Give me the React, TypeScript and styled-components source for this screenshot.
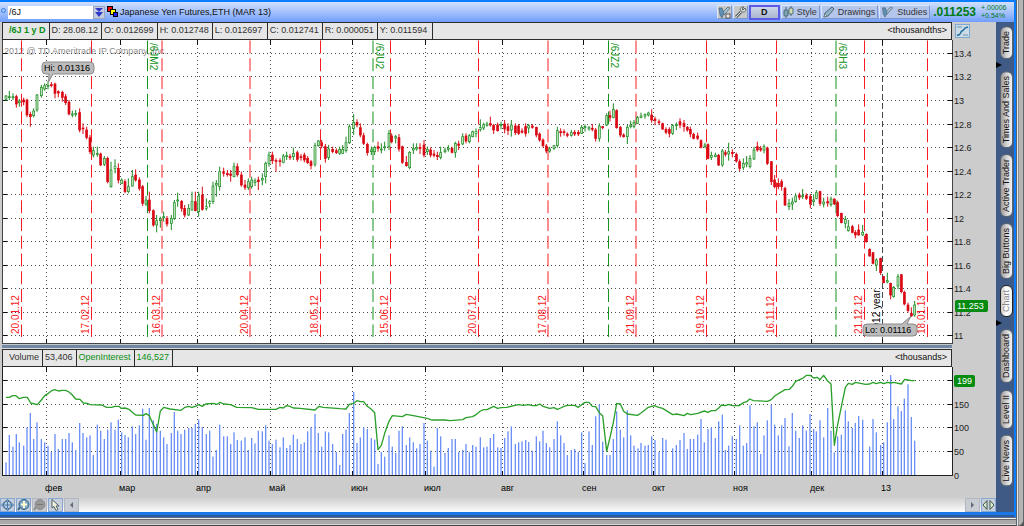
import React from "react";
import styled, { createGlobalStyle } from "styled-components";

const GlobalStyle = createGlobalStyle`
  * { box-sizing: border-box; }
  body {
    margin: 0;
    background: #555;
    font-family: "Liberation Sans", Arial, sans-serif;
    font-size: 9px;
    line-height: 12px;
    color: #111;
  }
  button, input { font: inherit; color: inherit; margin: 0; }
  svg { display: block; }
`;

const Frame = styled.div`
  padding: 0 8px 9px 0;
  background:
    linear-gradient(to right, #56626e 0 1px, #e6e6e6 1px 2px, #909090 2px 3px, #b4b4b4 3px 7px, #666 7px) right top / 8px 100% no-repeat,
    linear-gradient(to bottom, #5b6f8a 0 1px, #f0f0f0 1px 2px, #6c6c6c 2px 3px, #a8a8a8 3px 7px, #d8d8d8 7px 8px, #444 8px) left bottom / 100% 9px no-repeat;
  border-bottom-right-radius: 8px;
`;

const Window = styled.div`
  border: solid #0a7cff;
  border-width: 2px 2px 0 0;
  background: #ccc;
`;

const Header = styled.header`
  display: flex;
  align-items: center;
  height: 20px;
  padding: 0 3px 0 0;
  background: linear-gradient(#cfe0ff, #a5c2fd 50%, #709efb);
`;

const LinkDot = styled.span`
  flex: none;
  width: 5px;
  height: 5px;
  margin: 0 2px 4px 1px;
  border: 1px solid #2e7bea;
  border-radius: 50%;
`;

const SymbolInput = styled.input`
  width: 85px;
  height: 13px;
  padding: 0 1px;
  border: 0;
  background: #fff;
  &:focus { outline: none; }
`;

const PickButton = styled.button`
  width: 12px;
  height: 13px;
  padding: 1px;
  border: 1px solid #9aa7c2;
  background: #c3cbe0;
`;

const Title = styled.h1`
  flex: 1;
  margin: 0 0 0 1px;
  font-size: 9px;
  font-weight: normal;
  white-space: nowrap;
`;

const SymbolMark = styled.span`
  margin-left: 2px;
`;

const HeaderTools = styled.div`
  display: flex;
  gap: 1px;
  align-items: center;
`;

const HeaderButton = styled.button`
  display: flex;
  align-items: center;
  gap: 3px;
  height: 14px;
  padding: 0 2px 0 1px;
  border: 1px solid;
  border-color: #dbe6fb #7f97c8 #7f97c8 #dbe6fb;
  background: #b4c6ec;
  color: #333;
  white-space: nowrap;
`;

const ToolButton = styled(HeaderButton)`
  width: 15px;
  padding: 0;
  background: #c8c8c8;
`;

const PeriodButton = styled.button`
  width: 31px;
  height: 15px;
  padding: 0;
  border: 2px solid #5b5be8;
  background: linear-gradient(#cdd6e8, #aab6cf);
  font-weight: bold;
  line-height: 11px;
`;

const LastPrice = styled.strong`
  margin-left: 2px;
  font-size: 12px;
  color: #007a12;
`;

const Change = styled.div`
  width: 34px;
  padding-left: 4px;
  font-size: 7px;
  line-height: 8px;
  color: #007a12;
`;

const Body = styled.div`
  display: grid;
  grid-template-columns: minmax(0, 1fr) 18px;
`;

const Charts = styled.main`
  min-width: 0;
`;

const ChartRow = styled.div`
  display: grid;
  grid-template-columns: 952fr 44fr;
  background: #ccc;
`;

const InfoBar = styled.div`
  display: flex;
  align-items: stretch;
  height: 18px;
  margin-left: 2px;
  border: 1px solid #2c2c2c;
  background: #e6e6e6;
`;

const InfoCell = styled.span<{ $green?: boolean; $bold?: boolean; $lead?: boolean }>`
  padding: 0 3px 0 ${(p) => (p.$lead ? 6 : 2)}px;
  border-right: 1px solid #2c2c2c;
  line-height: 15px;
  white-space: nowrap;
  color: ${(p) => (p.$green ? "#0a8f14" : "#333")};
  font-weight: ${(p) => (p.$bold ? "bold" : "normal")};
`;

const QuoteCell = styled(InfoCell)`
  min-width: 55px;
`;

const Units = styled.span`
  margin-left: auto;
  padding-right: 4px;
  line-height: 15px;
`;

const AxisHead = styled.div`
  padding: 2px 0 0 3px;
`;

const ScaleButton = styled.button`
  width: 15px;
  height: 14px;
  padding: 0;
  border: 1px solid #7fa8cf;
  background: #cddbe6;
`;

const Splitter = styled.div`
  height: 5px;
  margin-left: 2px;
  background: linear-gradient(#c4c8cc 0 1px, #7388a3 1px 4px, #dcdcdc 4px);
`;

const Plot = styled.svg`
  width: 100%;
  height: auto;
  background: #ccc;
  font-family: "Liberation Sans", Arial, sans-serif;
  font-size: 9px;
`;

const Footer = styled.footer`
  display: flex;
  align-items: center;
  gap: 1px;
  height: 15px;
  background: linear-gradient(#ccc, #fcfcfc);
`;

const FootButton = styled.button<{ $quiet?: boolean }>`
  width: 15px;
  height: 14px;
  padding: 0;
  border: 1px solid ${(p) => (p.$quiet ? "#b2b8c2" : "#86a8d2")};
  background: ${(p) => (p.$quiet ? "#c9cdd3" : "#c6cfdb")};
`;

const Track = styled.div`
  flex: 1;
`;

const BottomEdge = styled.div`
  height: 5px;
  background: linear-gradient(#1a78e6 0 3px, #2d5a9e 3px);
`;

const Rail = styled.nav`
  display: flex;
  flex-direction: column;
  align-items: flex-end;
  padding: 4px 1px 0 0;
  background: #3f5b85;
`;

const RailTab = styled.button<{ $active?: boolean }>`
  width: 13px;
  margin-bottom: 6px;
  padding: 4px 0;
  border: 1px solid ${(p) => (p.$active ? "#222" : "#5d6470")};
  border-radius: 6px;
  background: linear-gradient(to right, #f2f2f2, ${(p) => (p.$active ? "#fff, #ccc" : "#d2d2d2, #9c9c9c")});
  color: ${(p) => (p.$active ? "#888" : "#111")};
  writing-mode: vertical-rl;
  transform: rotate(180deg);
  line-height: 11px;
  white-space: nowrap;
`;

const RailArrow = styled.span`
  align-self: flex-start;
  width: 0;
  height: 6px;
  border: solid transparent;
  border-width: 3px 0 3px 6px;
  border-left-color: #000;
  transform: translateY(-3px);
`;

/* Series points are stored in thirds of a pixel. */

const FINE = "scale(0.33333333)";

// x, high, body top, body bottom, low, direction
const CANDLES = `
18 285 288 298 303 g|28 273 290 293 300 g|39 280 290 293 300 g|49 284 290 312 323 r|58 297 303 308 320 g|71 293 300 306 316 r
81 296 300 345 352 r|91 335 343 350 380 r|101 325 333 347 352 g|111 282 285 330 335 g|124 255 262 287 293 g|134 250 257 267 272 g
144 243 256 259 268 g|154 246 254 257 262 r|165 248 252 280 295 r|175 271 275 279 292 r|187 272 277 292 305 r|197 282 290 308 315 r
207 300 306 342 346 r|217 332 342 345 352 g|227 330 340 343 350 g|239 325 338 390 397 r|249 370 384 387 402 r|260 380 390 412 418 r
270 405 413 455 462 r|280 440 452 465 472 g|292 440 460 463 470 g|302 458 462 495 498 r|313 468 475 493 498 g|323 470 475 545 550 r
333 485 510 560 563 g|345 478 500 505 520 g|355 490 505 540 550 r|365 535 540 550 552 g|375 538 545 575 580 r|385 535 560 575 580 g
397 510 530 558 560 g|407 508 525 540 545 r|418 532 540 565 572 r|428 555 560 610 618 r|438 588 600 612 618 g|448 575 600 632 640 r
460 628 632 675 680 r|470 645 662 675 697 g|481 650 657 662 683 g|491 635 650 653 665 g|501 648 655 672 680 r|514 645 655 670 690 g
523 600 608 655 660 g|533 578 600 603 620 g|545 600 604 625 635 r|554 615 625 645 652 r|566 612 625 645 648 g|576 575 605 630 632 g
586 575 605 632 634 r|596 575 588 635 650 g|607 560 585 628 632 r|619 595 620 625 632 g|629 600 605 610 622 g|639 545 558 605 612 g
649 540 550 555 590 g|659 500 515 560 572 g|671 503 515 520 530 r|682 510 520 524 530 r|692 510 522 526 545 r|702 488 500 530 532 g
712 490 500 524 530 r|724 515 525 555 560 r|735 540 555 562 570 r|745 535 545 563 570 g|755 530 540 560 566 g|765 535 542 548 558 g
775 530 540 545 570 r|787 520 535 540 556 g|797 485 490 530 550 g|807 455 465 490 500 g|817 455 465 482 492 r|828 475 481 484 515 r
840 475 482 485 500 r|850 462 468 487 490 g|860 455 467 470 480 g|870 462 470 473 480 r|880 443 460 470 480 g|892 452 458 478 485 r
903 462 470 473 482 r|913 458 465 480 487 r|923 468 475 488 492 r|933 480 485 497 508 r|945 428 437 493 500 g|955 420 423 437 440 g
965 420 428 438 445 r|976 432 440 475 488 r|986 435 447 473 480 g|998 440 448 455 460 r|1009 445 452 458 462 r|1019 440 448 460 465 g
1028 435 448 460 462 g|1038 410 428 452 458 g|1048 373 380 428 432 g|1061 342 367 385 405 g|1071 358 367 375 382 r|1081 370 383 405 412 r
1091 398 407 430 435 r|1102 428 433 458 467 r|1114 440 450 455 465 g|1124 437 443 455 465 g|1134 425 440 445 455 r|1144 430 447 450 460 g
1154 425 440 443 452 g|1167 390 400 440 450 g|1175 400 408 425 430 r|1187 405 410 414 430 g|1197 402 413 447 455 r|1207 437 440 487 492 r
1219 468 487 497 500 r|1229 453 457 503 508 g|1240 430 445 450 462 g|1250 430 443 447 452 g|1260 430 442 446 462 r|1272 420 435 465 472 r
1282 440 448 455 465 g|1292 442 450 465 472 r|1302 450 462 466 472 r|1312 455 466 470 480 r|1322 440 458 472 478 g|1335 443 450 455 460 g
1345 435 444 448 455 g|1356 440 445 457 460 r|1366 425 430 457 473 g|1376 422 432 436 450 r|1388 400 410 432 435 g|1398 400 408 423 430 r
1408 402 407 425 430 g|1418 392 395 410 412 g|1428 385 395 400 412 g|1441 358 383 388 395 g|1451 368 374 384 390 g|1461 365 372 376 380 g
1471 350 371 375 380 r|1481 372 376 390 402 r|1493 368 375 392 395 r|1503 365 373 377 388 g|1514 360 372 387 400 r|1524 370 380 392 405 r
1534 360 375 390 410 g|1546 370 378 398 405 r|1556 372 378 400 405 r|1566 385 393 397 400 r|1577 370 380 400 410 r|1586 372 377 384 400 g
1597 372 378 382 386 r|1609 380 382 405 412 r|1619 397 402 420 425 r|1629 415 420 437 443 r|1639 432 438 453 460 r|1649 440 447 453 458 g
1662 435 437 445 450 g|1672 380 392 437 443 g|1682 385 395 398 410 r|1692 388 395 398 407 r|1702 397 402 406 412 r|1714 390 398 406 410 g
1724 390 397 402 408 r|1735 390 397 402 408 r|1745 375 382 400 402 g|1755 373 379 383 395 g|1767 378 383 387 392 g|1777 372 385 388 394 r
1787 384 390 415 425 r|1798 370 378 415 425 g|1808 378 380 383 388 r|1820 340 347 375 378 g|1830 332 347 352 365 r|1840 310 328 352 355 g
1850 328 332 383 386 r|1861 378 382 405 412 r|1871 400 405 410 413 r|1882 375 382 410 432 g|1892 362 375 380 385 g|1902 360 367 380 385 g
1912 348 352 370 372 g|1923 338 348 352 355 g|1935 340 344 348 356 g|1945 335 339 345 350 g|1955 328 345 360 368 r|1965 350 357 362 375 r
1977 358 365 368 375 r|1988 368 371 387 390 r|1998 382 388 397 403 r|2008 382 388 400 412 r|2018 372 377 400 405 g|2029 367 373 377 390 g
2040 355 365 375 385 r|2052 360 370 380 395 r|2062 378 382 390 395 r|2071 380 388 402 412 r|2081 398 403 415 418 r|2093 398 408 415 420 r
2103 418 422 442 445 r|2115 428 435 440 445 g|2124 430 434 475 478 r|2134 455 466 472 480 g|2146 458 465 470 472 g|2156 462 466 495 498 r
2167 447 453 495 500 g|2176 450 458 463 470 r|2186 428 455 462 482 g|2197 448 457 461 472 r|2209 458 463 483 488 r|2219 478 485 505 513 r
2230 475 490 502 510 g|2240 468 488 492 502 g|2250 465 475 500 505 g|2262 440 450 477 480 g|2272 425 440 450 455 r|2282 438 446 450 455 r
2292 433 440 450 460 g|2302 440 444 490 495 r|2314 483 485 545 555 r|2324 525 540 560 565 r|2335 535 550 560 568 r|2345 538 545 560 572 r
2355 560 565 615 618 r|2367 597 610 620 630 g|2377 593 606 612 630 g|2387 580 588 605 608 g|2398 578 585 592 600 r|2408 567 587 590 597 g
2419 580 587 595 600 r|2431 582 590 612 625 r|2441 583 600 605 618 g|2449 570 578 595 598 g|2460 572 575 610 618 r|2471 593 606 612 622 g
2483 590 605 609 620 r|2493 590 597 614 620 g|2503 595 597 612 615 r|2513 602 608 647 652 r|2524 638 640 668 670 r|2536 648 658 670 685 g
2545 660 680 692 695 g|2557 675 680 697 700 r|2566 690 697 705 715 r|2576 673 690 705 707 r|2588 675 697 705 708 g|2599 700 703 725 728 r
2609 745 748 768 770 r|2619 756 758 790 793 r|2629 775 780 795 813 g|2642 773 775 818 825 r|2651 828 830 848 850 r|2662 818 842 846 850 g
2672 848 850 885 898 r|2681 858 862 890 893 g|2694 822 830 858 868 g|2704 822 824 875 880 r|2713 872 877 912 916 r|2724 908 915 932 938 r
2734 922 940 948 950 r|2744 903 915 945 950 g`
  .trim()
  .split(/[\n|]/)
  .map((row) => {
    const [x, high, top, bottom, low, dir] = row.split(" ");
    return { x: +x, high: +high, top: +top, bottom: +bottom, low: +low, up: dir === "g" };
  });

// x, top of bar
const VOLUMES = `18,349 28,267 39,302 49,264 58,289 71,299 81,244 91,201 101,279 111,229 124,279 134,289 144,299 154,318 165,264 175,309
187,279 197,279 207,261 217,289 227,312 239,231 249,261 260,274 270,268 280,327 292,236 302,254 313,279 323,251 333,229 345,251
355,221 365,259 375,267 385,274 397,241 407,264 418,238 428,188 438,281 448,186 460,223 470,234 481,254 491,274 501,294 514,261
523,198 533,254 543,264 554,251 566,246 576,246 586,234 596,221 607,243 619,264 629,254 639,332 649,312 659,236 671,271 682,271
692,294 702,259 712,282 724,284 735,274 745,312 755,276 765,292 775,254 787,256 797,238 807,284 817,294 828,281 840,304 850,274
860,306 870,297 880,266 892,279 903,294 913,289 923,256 933,244 945,204 955,261 965,302 976,256 986,259 998,294 1009,318 1019,357
1028,264 1038,251 1048,201 1061,138 1071,291 1081,274 1091,244 1102,249 1114,276 1124,281 1134,354 1144,318 1154,332 1167,268
1177,302 1187,321 1197,254 1207,241 1219,297 1229,274 1240,289 1250,307 1260,294 1272,231 1282,284 1292,314 1302,362 1312,246
1322,271 1335,321 1345,306 1356,279 1366,279 1376,318 1388,312 1398,294 1408,318 1418,297 1428,302 1441,274 1451,304 1461,302
1471,276 1481,264 1493,304 1503,306 1514,276 1524,256 1534,241 1546,294 1556,289 1566,286 1577,282 1586,288 1597,314 1609,271
1619,286 1629,254 1639,291 1649,304 1662,279 1672,226 1682,268 1692,291 1702,327 1714,312 1724,309 1735,318 1745,259 1755,351
1767,256 1777,297 1787,211 1798,175 1808,287 1820,327 1830,327 1840,279 1850,196 1861,251 1871,274 1882,193 1892,268 1902,299
1914,307 1923,291 1935,299 1945,297 1955,271 1965,282 1977,318 1988,276 1998,281 2018,307 2029,297 2040,282 2052,261 2062,309
2071,279 2081,279 2093,266 2103,219 2113,289 2124,249 2134,244 2146,276 2156,226 2167,206 2176,312 2186,299 2197,271 2209,279
2219,238 2230,299 2240,291 2250,178 2262,241 2272,229 2282,324 2292,268 2302,223 2314,176 2324,236 2335,268 2345,238 2355,216
2367,301 2377,201 2387,254 2398,276 2408,238 2419,254 2430,204 2441,249 2449,256 2460,223 2471,274 2483,186 2493,254 2503,319
2513,271 2524,266 2536,193 2545,226 2557,246 2566,231 2576,210 2588,221 2609,302 2619,219 2629,259 2642,297 2651,289 2662,229
2672,87 2681,219 2694,181 2704,195 2713,158 2724,115 2734,213 2744,284`
  .split(/\s+/)
  .map((pair) => pair.split(",").map(Number));

const OPEN_INTEREST = `18,154 28,154 38,149 48,149 58,158 70,154 82,154 92,171 112,176 124,162 134,149 145,142 155,134 165,131 175,135
187,133 197,133 207,138 217,147 227,159 240,160 250,171 262,172 270,176 305,177 320,184 335,184 345,181 357,181 363,187 375,186
387,190 397,199 407,207 430,208 438,203 448,209 460,236 470,258 481,195 491,184 510,189 543,193 555,184 566,181 576,184 586,181
596,176 607,181 617,174 640,172 652,175 660,169 672,174 692,176 710,184 755,185 775,190 828,190 840,184 850,186 860,179 870,181
880,186 900,187 945,192 957,181 970,184 1020,188 1038,189 1048,175 1061,172 1071,164 1081,167 1091,167 1102,181 1114,190
1124,200 1134,311 1144,298 1154,262 1167,226 1177,209 1207,212 1219,205 1240,209 1282,217 1295,222 1335,222 1350,224 1388,221
1398,215 1418,212 1428,206 1441,195 1451,191 1461,191 1481,181 1493,187 1503,185 1520,184 1545,178 1556,176 1570,178 1586,176
1597,179 1609,179 1619,174 1629,181 1649,187 1662,185 1672,190 1682,186 1692,181 1702,178 1724,178 1735,184 1745,176 1755,169
1767,169 1777,181 1787,182 1798,200 1808,209 1820,316 1830,274 1840,230 1850,172 1861,174 1871,196 1882,204 1912,208 1923,201
1945,184 1962,179 1977,184 1988,187 2018,206 2030,204 2052,209 2062,202 2072,206 2093,202 2113,195 2124,199 2134,194 2146,194
2156,186 2165,177 2176,179 2186,175 2197,179 2217,179 2230,170 2240,167 2249,159 2260,164 2302,166 2314,161 2324,150 2355,131
2368,130 2377,121 2387,106 2408,97 2420,88 2430,88 2441,96 2451,94 2460,101 2471,88 2483,105 2493,114 2503,298 2513,236
2536,124 2545,112 2557,115 2566,109 2597,115 2609,114 2619,109 2629,113 2642,109 2651,113 2662,109 2672,111 2681,109 2704,114
2714,100 2724,102 2734,104 2744,104`;

const MONTHS: [number, string][] = [
  [46, "фев"], [120, "мар"], [197, "апр"], [270, "май"], [352, "июн"], [425, "июл"],
  [502, "авг"], [583, "сен"], [653, "окт"], [734, "ноя"], [811, "дек"], [882, "13"],
];

const EXPIRIES: [number, string][] = [
  [21.5, "20.01.12"], [91.5, "17.02.12"], [162, "16.03.12"], [250, "20.04.12"], [320.5, "18.05.12"],
  [390.5, "15.06.12"], [478.5, "20.07.12"], [548, "17.08.12"], [636, "21.09.12"], [706.5, "19.10.12"],
  [776.5, "16.11.12"], [864.5, "21.12.12"], [927.5, "18.01.13"],
];

const CONTRACTS: [number, string][] = [
  [147.5, "/6JM2"], [373, "/6JU2"], [608.5, "/6JZ2"], [836, "/6JH3"],
];

const PRICES: [number, string][] = [
  [53, "13.4"], [76, "13.2"], [100, "13"], [124, "12.8"], [147, "12.6"], [171, "12.4"], [194, "12.2"],
  [218, "12"], [241, "11.8"], [265, "11.6"], [288, "11.4"], [312, "11.2"], [335, "11"],
];

const AMOUNTS: [number, string][] = [[380, ""], [404, "150"], [427, "100"], [451, "50"]];

const READOUT = ["O: 0.012699", "H: 0.012748", "L: 0.012697", "C: 0.012741", "R: 0.000051", "Y: 0.011594"];

function Grid({ top, bottom, rows }: { top: number; bottom: number; rows: [number, string][] }) {
  return (
    <g stroke="#4a4a4a">
      {rows.map(([y]) => (
        <g key={y}>
          <line x1="3" x2="952" y1={y + 0.5} y2={y + 0.5} strokeDasharray="1 3" />
          <path d={`M3 ${y + 0.5}h4M948 ${y + 0.5}h5`} stroke="#111" />
        </g>
      ))}
      {MONTHS.map(([x]) => (
        <g key={x}>
          <line x1={x + 0.5} x2={x + 0.5} y1={top} y2={bottom} strokeDasharray={x === 882 && top < 100 ? "6 3" : "1 3"} />
          <path d={`M${x + 0.5} ${top}v5M${x + 0.5} ${bottom - 4}v4`} stroke="#111" />
        </g>
      ))}
    </g>
  );
}

function Candles() {
  return (
    <g transform={FINE}>
      {CANDLES.map(({ x, high, top, bottom, low, up }) => (
        <g key={x} stroke={up ? "#1a8a22" : "#d80a14"} fill={up ? "#b8e0b4" : "#d80a14"}>
          <line x1={x} x2={x} y1={high} y2={low} strokeWidth="3" />
          <rect x={x - 3} y={top} width="6" height={Math.max(bottom - top, 3)} strokeWidth="2" />
        </g>
      ))}
    </g>
  );
}

function PriceChart() {
  return (
    <Plot viewBox="0 40 996 304" role="img" aria-label="Daily price">
      <rect x="2.5" y="38.5" width="950" height="305" fill="#fff" stroke="#444" />
      <text x="4" y="54" fill="#8c8c8c">2012 @ TD Ameritrade IP Company, Inc.</text>
      <Grid top={40} bottom={343} rows={PRICES} />
      {EXPIRIES.map(([x, label]) => (
        <g key={label}>
          <line x1={x} x2={x} y1="40.5" y2="337" stroke="#f81c24" strokeDasharray="13 4.75" />
          <text transform={`translate(${Math.floor(x) - 2} 334) rotate(-90)`} fill="#f81c24" fontSize="10">{label}</text>
        </g>
      ))}
      {CONTRACTS.map(([x, label]) => (
        <g key={label}>
          <line x1={x} x2={x} y1="40.5" y2="337" stroke="#139320" strokeDasharray="13 4.75" />
          <text transform={`translate(${Math.floor(x) + 3} 43) rotate(90)`} fill="#139320" fontSize="10">{label}</text>
        </g>
      ))}
      <text transform="translate(880 334) rotate(-90)" fontSize="10">2012 year</text>
      <Candles />
      <g fill="#bcbcbc" stroke="#8a8a8a">
        <path d="M46 62h44a4 4 0 0 1 4 4v4a4 4 0 0 1-4 4H53L48.500 82L49 74H46a4 4 0 0 1-4-4v-4a4 4 0 0 1 4-4z" />
        <path d="M867 324h35L911 316L907 324h6a4 4 0 0 1 4 4v4a4 4 0 0 1-4 4H867a4 4 0 0 1-4-4v-4a4 4 0 0 1 4-4z" />
      </g>
      <text x="44" y="71">Hi: 0.01316</text>
      <text x="865" y="333">Lo: 0.01116</text>
      {PRICES.map(([y, label]) => (
        <text key={label} x="954" y={y + 4} fill="#222">{label}</text>
      ))}
      <rect x="955" y="300" width="33" height="12" rx="2" fill="#078a10" />
      <text x="957" y="309" fill="#fff">11.253</text>
    </Plot>
  );
}

function VolumeChart() {
  return (
    <Plot viewBox="0 367 996 130" role="img" aria-label="Volume and open interest">
      <rect x="2.5" y="365.5" width="950" height="110" fill="#fff" stroke="#222" />
      <Grid top={367} bottom={475} rows={AMOUNTS} />
      <g transform="translate(0 346) scale(0.33333333)">
        {VOLUMES.map(([x, top]) => (
          <rect key={x} x={x - 2} y={top} width="4" height={387 - top} fill="#6c90f6" />
        ))}
        <polyline points={OPEN_INTEREST} fill="none" stroke="#2ba02b" strokeWidth="4" strokeLinejoin="round" />
      </g>
      {AMOUNTS.map(([y, label]) => (
        <text key={y} x="954" y={y + 4} fill="#222">{label}</text>
      ))}
      <text x="954" y="479" fill="#222">0</text>
      <rect x="954" y="375" width="21" height="12" rx="2" fill="#078a10" />
      <text x="957" y="384" fill="#fff">199</text>
      {MONTHS.map(([x, label]) => (
        <text key={x} x={x - 1} y="491">{label}</text>
      ))}
    </Plot>
  );
}

const WrenchShape = () => (
  <>
    <path d="M2 11L7 6" stroke="#5c6670" strokeWidth="3" />
    <path d="M2 11L7 6" stroke="#d8dcc8" strokeWidth="1" />
    <path d="M11 2L9 4L8 3L10 1C7 0 5 3 7 5S11 6 12 4z" fill="#d8dcc8" stroke="#5c6670" />
  </>
);

const BrushShape = () => (
  <>
    <path d="M4 7L10 1L12 2L6 9z" fill="#a9c6d6" stroke="#4f6472" strokeWidth="0.8" />
    <path d="M1 2H4L6 7L4 12L2 9z" fill="#5d90b4" stroke="#4f6472" strokeWidth="0.7" />
  </>
);

export default function App() {
  return (
    <>
      <GlobalStyle />
      <Frame>
        <Window>
          <Header>
            <LinkDot />
            <SymbolInput aria-label="Symbol" defaultValue="/6J" />
            <PickButton aria-label="Choose symbol">
              <svg width="8" height="9" viewBox="0 0 8 9" fill="#2f38c8">
                <path d="M0 0h8L4 4zM0 4h8L4 9z" />
              </svg>
            </PickButton>
            <SymbolMark>
              <svg width="12" height="12" viewBox="0 0 12 12" stroke="#000">
                <rect x="0.500" y="0.500" width="5" height="5" fill="#f00" />
                <rect x="3.500" y="3.500" width="5" height="5" fill="#ff0" />
                <rect x="6.500" y="6.500" width="4" height="4" fill="#22f" />
              </svg>
            </SymbolMark>
            <Title>Japanese Yen Futures,ETH (MAR 13)</Title>
            <HeaderTools>
              <ToolButton aria-label="Study set">
                <svg width="13" height="13" viewBox="0 0 13 13" fill="none">
                  <BrushShape />
                  <rect x="8" y="8" width="4" height="4" fill="#eee" stroke="#555" />
                </svg>
              </ToolButton>
              <ToolButton aria-label="Chart settings">
                <svg width="13" height="13" viewBox="0 0 13 13" fill="none"><WrenchShape /></svg>
              </ToolButton>
              <PeriodButton>D</PeriodButton>
              <HeaderButton>
                <svg width="11" height="12" viewBox="0 0 11 12" stroke="#4c6a74">
                  <path d="M3 1v11M8 0v10" />
                  <rect x="1" y="4" width="4" height="6" rx="1" fill="#7fa2b4" />
                  <rect x="6" y="2" width="4" height="6" rx="1" fill="#d4dcb4" />
                </svg>
                Style
              </HeaderButton>
              <HeaderButton>
                <svg width="12" height="12" viewBox="0 0 12 12" stroke="#4f6472">
                  <path d="M1 11L2 7L9 1L11 3L5 10z" fill="#8fb4cc" />
                  <path d="M1 11L2 8L4 10z" fill="#e4e8d0" strokeWidth="0.500" />
                </svg>
                Drawings
              </HeaderButton>
              <HeaderButton>
                <svg width="13" height="12" viewBox="0 0 13 13" fill="none"><BrushShape /></svg>
                Studies
              </HeaderButton>
              <LastPrice>.011253</LastPrice>
              <Change>
                <div>+.00006</div>
                <div>+0.54%</div>
              </Change>
            </HeaderTools>
          </Header>
          <Body>
            <Charts>
              <ChartRow>
                <InfoBar>
                  <InfoCell $green $bold $lead>/6J 1 y D</InfoCell>
                  <InfoCell>D: 28.08.12</InfoCell>
                  {READOUT.map((item) => (
                    <QuoteCell key={item}>{item}</QuoteCell>
                  ))}
                  <Units>&lt;thousandths&gt;</Units>
                </InfoBar>
                <AxisHead>
                  <ScaleButton aria-label="Axis scaling">
                    <svg width="13" height="12" viewBox="0 0 13 12" fill="none">
                      <path d="M1 2h5M7 10h5" stroke="#6f93ae" />
                      <path d="M1 10C5 11 4 7 6 6S8 5 9 3L12 2" stroke="#1f6f9c" strokeWidth="1.500" />
                    </svg>
                  </ScaleButton>
                </AxisHead>
              </ChartRow>
              <PriceChart />
              <ChartRow>
                <Splitter />
              </ChartRow>
              <ChartRow>
                <InfoBar>
                  <InfoCell $lead>Volume</InfoCell>
                  <InfoCell>53,406</InfoCell>
                  <InfoCell $green>OpenInterest</InfoCell>
                  <InfoCell $green>146,527</InfoCell>
                  <Units>&lt;thousands&gt;</Units>
                </InfoBar>
              </ChartRow>
              <VolumeChart />
              <Footer>
                <FootButton aria-label="Crosshair">
                  <svg width="13" height="12" viewBox="0 0 13 12" fill="none" stroke="#3b6a9a">
                    <path d="M6.500 0.500L12.500 6L6.500 11.500L0.500 6z" />
                    <circle cx="6.500" cy="6" r="4" fill="#b4cbe0" />
                    <path d="M6.500 3v6M3.500 6h6" strokeWidth="0.8" />
                  </svg>
                </FootButton>
                <FootButton aria-label="Zoom in">
                  <svg width="13" height="12" viewBox="0 0 13 12">
                    <path d="M3 8L1 11" stroke="#3c6688" strokeWidth="2" />
                    <circle cx="7" cy="5.500" r="5" fill="#7fa6c4" stroke="#2f6189" />
                    <path d="M7 2v7M4 5.500h6" stroke="#fffbd0" strokeWidth="2" />
                  </svg>
                </FootButton>
                <FootButton aria-label="Zoom out" $quiet>
                  <svg width="13" height="12" viewBox="0 0 13 12">
                    <path d="M3 8L1 11" stroke="#888" strokeWidth="2" />
                    <circle cx="7" cy="5.500" r="5" fill="#999" stroke="#8a8a8a" />
                    <path d="M4 5.500h6" stroke="#777" />
                  </svg>
                </FootButton>
                <FootButton aria-label="Pointer">
                  <svg width="13" height="12" viewBox="0 0 13 12">
                    <path d="M3 0.500V9L5 7.500L7 11.500L9 10.500L7 7H10z" fill="#f0f3dc" stroke="#50606c" />
                  </svg>
                </FootButton>
                <FootButton aria-label="Scroll left" $quiet>
                  <svg width="13" height="12" viewBox="0 0 13 12"><path d="M8 3v6L5 6z" fill="#5f6b7c" /></svg>
                </FootButton>
                <Track />
                <FootButton aria-label="Scroll right" $quiet>
                  <svg width="13" height="12" viewBox="0 0 13 12"><path d="M5 3v6L8 6z" fill="#5f6b7c" /></svg>
                </FootButton>
                <FootButton aria-label="Expand area">
                  <svg width="13" height="12" viewBox="0 0 13 12" fill="#e0ead0" stroke="#3d5a48">
                    <path d="M5 1.500V10.500L1 6zM8 1.500V10.500L12 6z" />
                  </svg>
                </FootButton>
              </Footer>
            </Charts>
            <Rail>
              <RailTab>Trade</RailTab>
              <RailArrow />
              <RailTab>Times And Sales</RailTab>
              <RailTab>Active Trader</RailTab>
              <RailTab>Big Buttons</RailTab>
              <RailTab $active>Chart</RailTab>
              <RailArrow />
              <RailTab>Dashboard</RailTab>
              <RailTab>Level II</RailTab>
              <RailTab>Live News</RailTab>
            </Rail>
          </Body>
          <BottomEdge />
        </Window>
      </Frame>
    </>
  );
}
